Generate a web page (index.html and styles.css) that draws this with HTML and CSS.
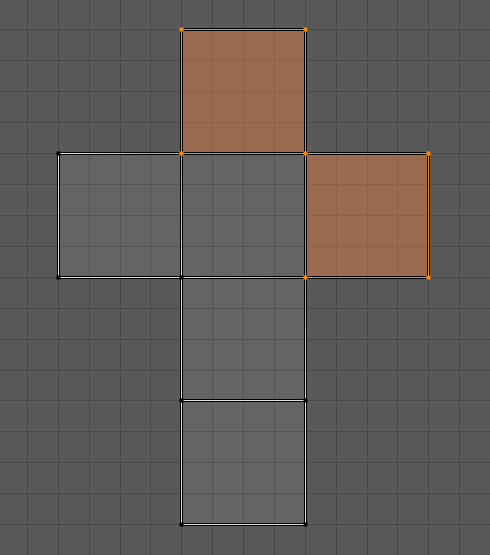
FILE: index.html
```html
<!DOCTYPE html>
<html>
<head>
<meta charset="utf-8">
<link rel="stylesheet" href="styles.css">
</head>
<body>
<div class="uv-editor">
<svg class="canvas" width="490" height="555" viewBox="0 0 490 555" xmlns="http://www.w3.org/2000/svg">
  <defs>
    <linearGradient id="g-h1" gradientUnits="userSpaceOnUse" x1="58.5" y1="0" x2="181.5" y2="0">
      <stop offset="0" stop-color="#e0e0e0"/><stop offset="1" stop-color="#ff8c10"/>
    </linearGradient>
    <linearGradient id="g-h2" gradientUnits="userSpaceOnUse" x1="181.5" y1="0" x2="305.5" y2="0">
      <stop offset="0" stop-color="#e0e0e0"/><stop offset="1" stop-color="#ff8c10"/>
    </linearGradient>
    <linearGradient id="g-v1" gradientUnits="userSpaceOnUse" x1="0" y1="153.5" x2="0" y2="277.5">
      <stop offset="0" stop-color="#ff8c10"/><stop offset="1" stop-color="#e0e0e0"/>
    </linearGradient>
    <linearGradient id="g-v2" gradientUnits="userSpaceOnUse" x1="0" y1="277.5" x2="0" y2="400.5">
      <stop offset="0" stop-color="#ff8c10"/><stop offset="1" stop-color="#e0e0e0"/>
    </linearGradient>
  </defs>

  <rect class="bg" x="0" y="0" width="490" height="555"/>

  <g class="grid">
    <rect x="27" y="0" width="1" height="555"/>
    <rect x="58" y="0" width="1" height="555"/>
    <rect x="89" y="0" width="1" height="555"/>
    <rect x="120" y="0" width="1" height="555"/>
    <rect x="150" y="0" width="1" height="555"/>
    <rect x="181" y="0" width="1" height="555"/>
    <rect x="212" y="0" width="1" height="555"/>
    <rect x="243" y="0" width="1" height="555"/>
    <rect x="274" y="0" width="1" height="555"/>
    <rect x="305" y="0" width="1" height="555"/>
    <rect x="336" y="0" width="1" height="555"/>
    <rect x="367" y="0" width="1" height="555"/>
    <rect x="397" y="0" width="1" height="555"/>
    <rect x="428" y="0" width="1" height="555"/>
    <rect x="459" y="0" width="1" height="555"/>

    <rect x="0" y="29" width="490" height="1"/>
    <rect x="0" y="60" width="490" height="1"/>
    <rect x="0" y="91" width="490" height="1"/>
    <rect x="0" y="122" width="490" height="1"/>
    <rect x="0" y="153" width="490" height="1"/>
    <rect x="0" y="184" width="490" height="1"/>
    <rect x="0" y="215" width="490" height="1"/>
    <rect x="0" y="246" width="490" height="1"/>
    <rect x="0" y="277" width="490" height="1"/>
    <rect x="0" y="308" width="490" height="1"/>
    <rect x="0" y="339" width="490" height="1"/>
    <rect x="0" y="370" width="490" height="1"/>
    <rect x="0" y="400" width="490" height="1"/>
    <rect x="0" y="431" width="490" height="1"/>
    <rect x="0" y="462" width="490" height="1"/>
    <rect x="0" y="493" width="490" height="1"/>
    <rect x="0" y="524" width="490" height="1"/>
  </g>

  <g class="faces">
    <rect class="face sel" x="181" y="29" width="125" height="125"/>
    <rect class="face" x="58" y="153" width="124" height="125"/>
    <rect class="face" x="181" y="153" width="125" height="125"/>
    <rect class="face sel" x="305" y="153" width="124" height="125"/>
    <rect class="face" x="181" y="277" width="125" height="124"/>
    <rect class="face" x="181" y="400" width="125" height="125"/>
  </g>

  <g class="edges-outline">
    <line x1="181.5" y1="29.5" x2="305.5" y2="29.5"/>
    <line x1="181.5" y1="29.5" x2="181.5" y2="153.5"/>
    <line x1="305.5" y1="29.5" x2="305.5" y2="153.5"/>
    <line x1="58.5" y1="153.5" x2="428.5" y2="153.5"/>
    <line x1="58.5" y1="277.5" x2="428.5" y2="277.5"/>
    <line x1="58.5" y1="153.5" x2="58.5" y2="277.5"/>
    <line x1="428.5" y1="153.5" x2="428.5" y2="277.5"/>
    <line x1="181.5" y1="153.5" x2="181.5" y2="524.5"/>
    <line x1="305.5" y1="153.5" x2="305.5" y2="524.5"/>
    <line x1="181.5" y1="400.5" x2="305.5" y2="400.5"/>
    <line x1="181.5" y1="524.5" x2="305.5" y2="524.5"/>
  </g>

  <g class="edges">
    <line class="e-sel" x1="181.5" y1="29.5" x2="305.5" y2="29.5"/>
    <line class="e-sel" x1="181.5" y1="29.5" x2="181.5" y2="153.5"/>
    <line class="e-sel" x1="305.5" y1="29.5" x2="305.5" y2="153.5"/>
    <line class="e-sel" x1="181.5" y1="153.5" x2="428.5" y2="153.5"/>
    <line class="e-sel" x1="305.5" y1="153.5" x2="305.5" y2="277.5"/>
    <line class="e-sel" x1="428.5" y1="153.5" x2="428.5" y2="277.5"/>
    <line class="e-sel" x1="305.5" y1="277.5" x2="428.5" y2="277.5"/>

    <line class="e-mix" stroke="url(#g-h1)" x1="58.5" y1="153.5" x2="181.5" y2="153.5"/>
    <line class="e-mix" stroke="url(#g-h2)" x1="181.5" y1="277.5" x2="305.5" y2="277.5"/>
    <line class="e-mix" stroke="url(#g-v1)" x1="181.5" y1="153.5" x2="181.5" y2="277.5"/>
    <line class="e-mix" stroke="url(#g-v2)" x1="305.5" y1="277.5" x2="305.5" y2="400.5"/>

    <line class="e-un" x1="58.5" y1="153.5" x2="58.5" y2="277.5"/>
    <line class="e-un" x1="58.5" y1="277.5" x2="181.5" y2="277.5"/>
    <line class="e-un" x1="181.5" y1="277.5" x2="181.5" y2="524.5"/>
    <line class="e-un" x1="305.5" y1="400.5" x2="305.5" y2="524.5"/>
    <line class="e-un" x1="181.5" y1="400.5" x2="305.5" y2="400.5"/>
    <line class="e-un" x1="181.5" y1="524.5" x2="305.5" y2="524.5"/>
  </g>

  <g class="verts">
    <rect class="v-sel" x="179.5" y="27.5" width="4" height="4"/>
    <rect class="v-sel" x="303.5" y="27.5" width="4" height="4"/>
    <rect class="v-sel" x="179.5" y="151.5" width="4" height="4"/>
    <rect class="v-sel" x="303.5" y="151.5" width="4" height="4"/>
    <rect class="v-sel" x="426.5" y="151.5" width="4" height="4"/>
    <rect class="v-sel" x="426.5" y="275.5" width="4" height="4"/>
    <rect class="v-sel" x="303.5" y="275.5" width="4" height="4"/>

    <rect class="v-un" x="56.5" y="151.5" width="4" height="4"/>
    <rect class="v-un" x="56.5" y="275.5" width="4" height="4"/>
    <rect class="v-un" x="179.5" y="275.5" width="4" height="4"/>
    <rect class="v-un" x="179.5" y="398.5" width="4" height="4"/>
    <rect class="v-un" x="303.5" y="398.5" width="4" height="4"/>
    <rect class="v-un" x="179.5" y="522.5" width="4" height="4"/>
    <rect class="v-un" x="303.5" y="522.5" width="4" height="4"/>
  </g>
</svg>
</div>
</body>
</html>
```
FILE: styles.css
```css
html, body {
  margin: 0;
  padding: 0;
  background: #595959;
  overflow: hidden;
}

.uv-editor {
  width: 490px;
  height: 555px;
}

.canvas {
  display: block;
}

.bg {
  fill: #595959;
}

.grid rect {
  fill: #4a4a4a;
}

.face {
  fill: rgba(255, 255, 255, 0.07);
}

.face.sel {
  fill: rgba(250, 130, 66, 0.42);
}

.edges-outline line {
  stroke: #000;
  stroke-width: 3;
  stroke-linecap: square;
}

.edges line {
  stroke-width: 1;
  stroke-linecap: butt;
}

.e-sel {
  stroke: #ff8c10;
}

.e-un {
  stroke: #e0e0e0;
}

.v-sel {
  fill: #ff8a00;
}

.v-un {
  fill: #000;
}
```
